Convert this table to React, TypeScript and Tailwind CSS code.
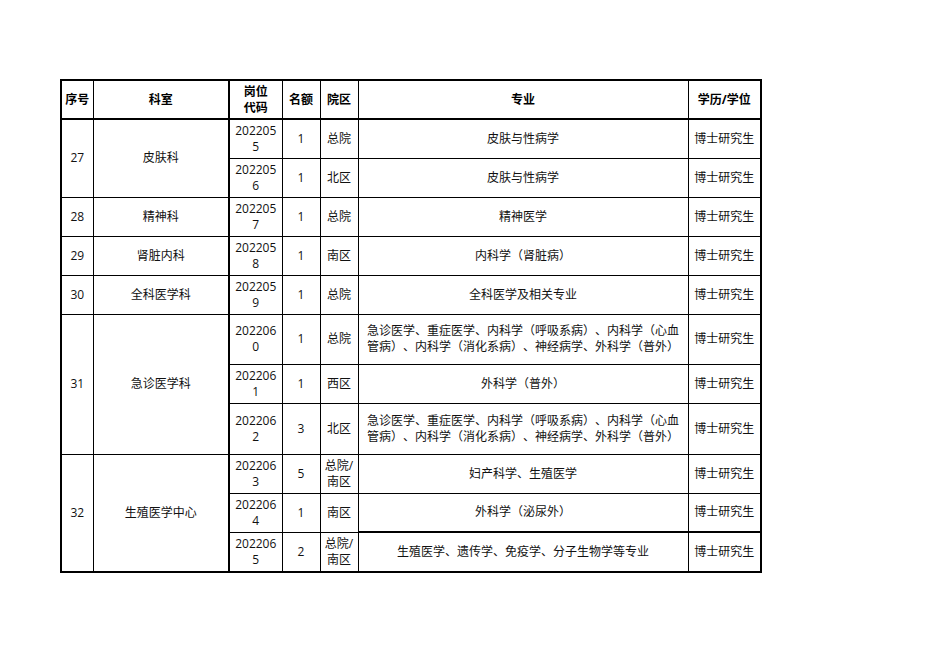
const font = { fontFamily: '"Open Sans", "Noto Sans CJK SC", "Noto Sans", sans-serif' };

type Row = {
  no?: string;
  dept?: string;
  span?: number;
  code: string;
  num: string;
  area: string[];
  major: string[];
  h: string;
  thickTop?: boolean;
};

const rows: Row[] = [
  { no: "27", dept: "皮肤科", span: 2, code: "2022055", num: "1", area: ["总院"], major: ["皮肤与性病学"], h: "h-[39px]" },
  { code: "2022056", num: "1", area: ["北区"], major: ["皮肤与性病学"], h: "h-[39px]" },
  { no: "28", dept: "精神科", span: 1, code: "2022057", num: "1", area: ["总院"], major: ["精神医学"], h: "h-[39px]" },
  { no: "29", dept: "肾脏内科", span: 1, code: "2022058", num: "1", area: ["南区"], major: ["内科学（肾脏病）"], h: "h-[39px]" },
  { no: "30", dept: "全科医学科", span: 1, code: "2022059", num: "1", area: ["总院"], major: ["全科医学及相关专业"], h: "h-[39px]" },
  {
    no: "31",
    dept: "急诊医学科",
    span: 3,
    code: "2022060",
    num: "1",
    area: ["总院"],
    major: ["急诊医学、重症医学、内科学（呼吸系病）、内科学（心血", "管病）、内科学（消化系病）、神经病学、外科学（普外）"],
    h: "h-[50px]",
  },
  { code: "2022061", num: "1", area: ["西区"], major: ["外科学（普外）"], h: "h-[39px]" },
  {
    code: "2022062",
    num: "3",
    area: ["北区"],
    major: ["急诊医学、重症医学、内科学（呼吸系病）、内科学（心血", "管病）、内科学（消化系病）、神经病学、外科学（普外）"],
    h: "h-[51px]",
  },
  { no: "32", dept: "生殖医学中心", span: 3, code: "2022063", num: "5", area: ["总院/", "南区"], major: ["妇产科学、生殖医学"], h: "h-[39px]" },
  { code: "2022064", num: "1", area: ["南区"], major: ["外科学（泌尿外）"], h: "h-[39px]" },
  { code: "2022065", num: "2", area: ["总院/", "南区"], major: ["生殖医学、遗传学、免疫学、分子生物学等专业"], h: "h-[40px]", thickTop: true },
];

function Lines({ items }: { items: string[] }) {
  return (
    <>
      {items.map((t, i) => (
        <span key={i} className="block">
          {t}
        </span>
      ))}
    </>
  );
}

export default function App() {
  const cell = "border border-black text-center align-middle p-0";
  return (
    <div className="min-h-[662px] w-[936px] bg-white pt-[79px] pl-[60px]" style={font}>
      <table className="border-collapse border-2 border-black text-[12px] leading-[16px] text-[#111] table-fixed w-[700px] [text-spacing-trim:space-all]">
        <colgroup>
          <col className="w-[32px]" />
          <col className="w-[136px]" />
          <col className="w-[53px]" />
          <col className="w-[38px]" />
          <col className="w-[38px]" />
          <col className="w-[330px]" />
          <col className="w-[73px]" />
        </colgroup>
        <thead>
          <tr className="h-[39px] font-bold text-black">
            <th className={cell}>序号</th>
            <th className={cell}>科室</th>
            <th className={`${cell} border-l-2`}>
              <Lines items={["岗位", "代码"]} />
            </th>
            <th className={cell}>名额</th>
            <th className={cell}>院区</th>
            <th className={cell}>专业</th>
            <th className={cell}>学历/学位</th>
          </tr>
        </thead>
        <tbody className="border-t-2 border-black">
          {rows.map((r, i) => (
            <tr key={i} className={r.h}>
              {r.no && (
                <>
                  <td rowSpan={r.span} className={cell}>
                    {r.no}
                  </td>
                  <td rowSpan={r.span} className={cell}>
                    {r.dept}
                  </td>
                </>
              )}
              <td className={`${cell} border-l-2`}>
                <Lines items={[r.code.slice(0, 6), r.code.slice(6)]} />
              </td>
              <td className={cell}>{r.num}</td>
              <td className={cell}>
                <Lines items={r.area} />
              </td>
              <td className={`${cell} ${r.thickTop ? "border-t-2" : ""}`}>
                <Lines items={r.major} />
              </td>
              <td className={`${cell} ${r.thickTop ? "border-t-2" : ""}`}>博士研究生</td>
            </tr>
          ))}
        </tbody>
      </table>
    </div>
  );
}
